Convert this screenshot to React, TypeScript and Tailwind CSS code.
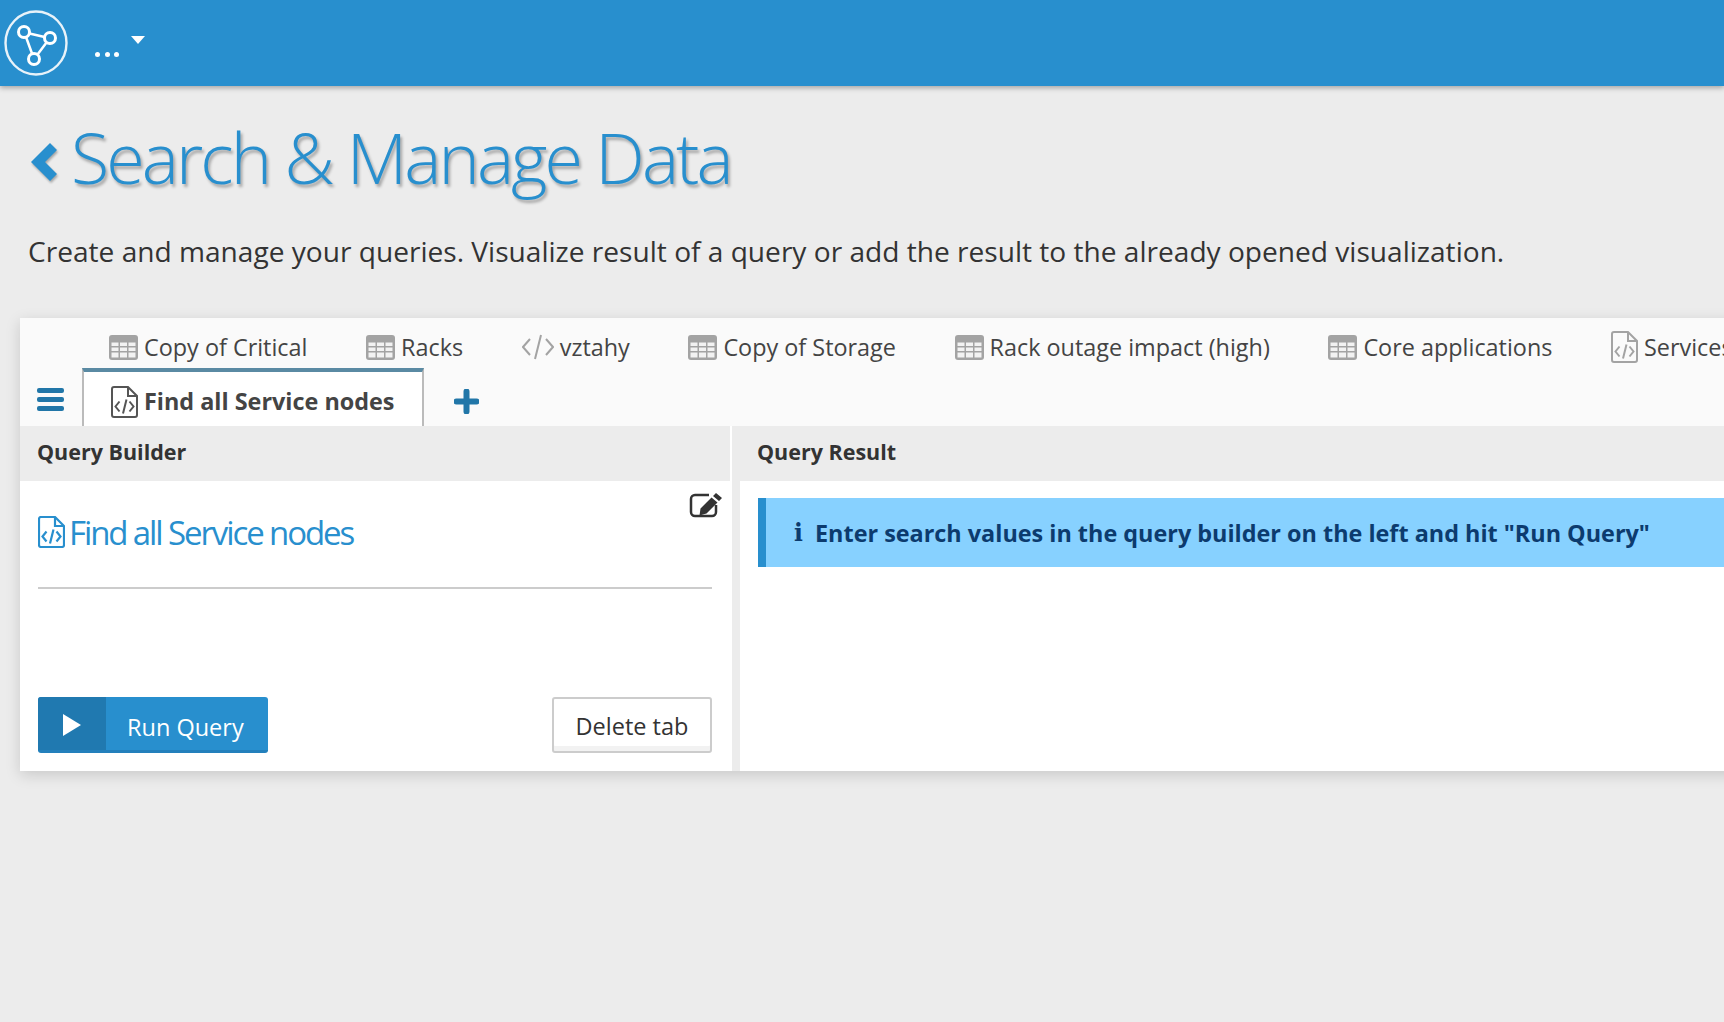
import React from 'react';

const TableIcon = () => (
  <svg viewBox="0 0 29 25" className="w-[29px] h-[25px] shrink-0">
    <rect width="29" height="25" rx="3" fill="#a3a3a3" />
    <path d="M2.500 7.500h7v3.500h-7zM11 7.500h7v3.500h-7zM19.500 7.500h7v3.500h-7zM2.500 12.500h7v3.500h-7zM11 12.500h7v3.500h-7zM19.500 12.500h7v3.500h-7zM2.500 17.500h7v5h-7zM11 17.500h7v5h-7zM19.500 17.500h7v5h-7z" fill="#f2f2f2" />
  </svg>
);

const CodeFileIcon = ({ color = '#a3a3a3', className = 'w-[27px] h-[32px]', width = 2 }: { color?: string; className?: string; width?: number }) => (
  <svg viewBox="0 0 27 32" className={`${className} shrink-0`} fill="none" stroke={color} strokeWidth={width}>
    <path d="M3 1h14l9 9v19a2 2 0 0 1-2 2H3a2 2 0 0 1-2-2V3a2 2 0 0 1 2-2z" />
    <path d="M17 1v9h9" />
    <path d="M8.500 15.500l-4 5 4 5M18.500 15.500l4 5-4 5M15.500 13.500l-3.500 14" />
  </svg>
);

const tabs = [
  { name: 'Copy of Critical', icon: 'table' },
  { name: 'Racks', icon: 'table' },
  { name: 'vztahy', icon: 'code' },
  { name: 'Copy of Storage', icon: 'table' },
  { name: 'Rack outage impact (high)', icon: 'table' },
  { name: 'Core applications', icon: 'table' },
  { name: 'Services', icon: 'file' },
];

const App = () => {
  return (
    <div className="w-[1724px] h-[1022px] overflow-hidden bg-[#ececec] font-['Open_Sans',sans-serif] text-[#333]">
      {/* Top bar */}
      <header className="h-[86px] bg-[#288fce] shadow-[0_2px_5px_rgba(0,0,0,0.3)] flex items-center pl-[4px]">
        <svg viewBox="0 0 64 66" className="w-[64px] h-[66px]" fill="none" stroke="#fff" strokeWidth="2.400">
          <ellipse cx="32" cy="33" rx="30.500" ry="31.500" stroke="#e8f2f9" />
          <circle cx="20" cy="22" r="5.500" strokeWidth="3" />
          <circle cx="46" cy="28" r="5.500" strokeWidth="3" />
          <circle cx="30" cy="49" r="5.500" strokeWidth="3" />
          <path d="M25.500 23.500l15 3.500M22 27l6 16.500M42.500 32.500l-9 12" strokeWidth="2.500" />
        </svg>
        <div className="relative ml-[26px] h-[40px] w-[60px]">
          <span className="absolute left-[1px] bottom-[6px] flex gap-[4.500px]">
            <i className="w-[5px] h-[5px] rounded-full bg-white" />
            <i className="w-[5px] h-[5px] rounded-full bg-white" />
            <i className="w-[5px] h-[5px] rounded-full bg-white" />
          </span>
          <span className="absolute left-[37px] top-[13px] w-0 h-0 border-x-[7px] border-x-transparent border-t-[8px] border-t-white" />
        </div>
      </header>

      {/* Page title */}
      <h1 className="mt-[31px] ml-[31px] flex items-center h-[80px] text-[#288fce] font-light text-[70px] tracking-[-2.900px] [text-shadow:2px_3px_3px_rgba(0,0,0,0.3)]">
        <svg viewBox="0 0 26 38" className="w-[26px] h-[38px] mr-[14px] mt-[9px] drop-shadow-[1px_2px_1px_rgba(0,0,0,0.3)]">
          <path d="M19 0l7 7-12 12 12 12-7 7L0 19z" fill="#288fce" />
        </svg>
        <span>Search &amp; Manage Data</span>
      </h1>
      <p className="mt-[36px] ml-[28px] text-[28.100px] leading-[36px] whitespace-nowrap">
        Create and manage your queries. Visualize result of a query or add the result to the already opened visualization.
      </p>

      {/* Card */}
      <div className="mt-[49px] ml-[20px] w-[1800px] h-[453px] bg-white shadow-[0_4px_14px_rgba(0,0,0,0.15)] flex flex-col">
        <div className="bg-[#fafafa] h-[108px] shrink-0">
          <div className="h-[50px] pt-[9px] pl-[81px] flex items-center whitespace-nowrap text-[23.400px] text-[#444]">
            {tabs.map((t) => (
              <div key={t.name} className="px-[29.300px] flex items-center gap-[6px] first:pl-[8px]">
                {t.icon === 'table' && <TableIcon />}
                {t.icon === 'code' && (
                  <svg viewBox="0 0 32 26" className="w-[32px] h-[26px]" fill="none" stroke="#a3a3a3" strokeWidth="2">
                    <path d="M8 5l-7 8 7 8M24 5l7 8-7 8M19 1l-6 24" />
                  </svg>
                )}
                {t.icon === 'file' && <CodeFileIcon />}
                <span>{t.name}</span>
              </div>
            ))}
          </div>
          <div className="h-[58px] flex items-stretch">
            <div className="w-[62px] flex flex-col justify-center gap-[4px] pl-[17px] pt-[5px]">
              <i className="block w-[27px] h-[5px] rounded-[2px] bg-[#2176a8]" />
              <i className="block w-[27px] h-[5px] rounded-[2px] bg-[#2176a8]" />
              <i className="block w-[27px] h-[5px] rounded-[2px] bg-[#2176a8]" />
            </div>
            <div className="w-[342px] bg-white border-x-2 border-x-[#bbb] border-t-4 border-t-[#5a8aa3] flex items-center pt-[6px] pl-[27px] gap-[6px] text-[23.400px] font-bold text-[#444]">
              <CodeFileIcon color="#555" />
              <span>Find all Service nodes</span>
            </div>
            <div className="flex items-center ml-[30px] pt-[8px]">
              <svg viewBox="0 0 25 25" className="w-[25px] h-[25px]">
                <path d="M12.500 2.500v20M2.500 12.500h20" stroke="#2176a8" strokeWidth="6" strokeLinecap="round" />
              </svg>
            </div>
          </div>
        </div>

        <div className="flex flex-1">
          {/* Query builder */}
          <div className="w-[712px] flex flex-col">
            <div className="h-[55px] mr-[2px] bg-[#ececec] flex items-center pb-[3px] pl-[17px] text-[21.500px] font-bold">Query Builder</div>
            <div className="relative flex-1 px-[18px]">
              <svg viewBox="0 0 33 25" className="absolute right-[10px] top-[12px] w-[33px] h-[25px]" fill="none">
                <path d="M20 2H6a4 4 0 0 0-4 4v13a4 4 0 0 0 4 4h17a4 4 0 0 0 4-4v-7" stroke="#333" strokeWidth="2.500" />
                <path d="M27 0l6 5-3 3-6-5zM22.500 4.500l6 5-11 11-7 2 1-7z" fill="#333" />
              </svg>
              <div className="h-[108px] border-b-2 border-b-[#ccc] mr-[2px] flex items-start pt-[30px] gap-[4px] text-[#288fce] text-[33px] font-normal tracking-[-2.100px] leading-[44px]">
                <CodeFileIcon color="#288fce" width={2.200} className="w-[27px] h-[32px] mt-[5px]" />
                <span>Find all Service nodes</span>
              </div>
              <div className="flex justify-between mt-[108px] mr-[2px]">
                <button className="w-[230px] h-[56px] bg-[#288fce] rounded-[3px] border-b-[3px] border-b-[#2380bc] flex items-center overflow-hidden text-white text-[23.500px]">
                  <span className="w-[68px] h-full bg-[#2079b0] flex items-center justify-center pt-[2px]">
                    <svg viewBox="0 0 18 22" className="w-[18px] h-[22px]"><path d="M0 0l18 11L0 22z" fill="#fff" /></svg>
                  </span>
                  <span className="ml-[21px] pt-[8px]">Run Query</span>
                </button>
                <button className="w-[160px] h-[56px] bg-white rounded-[3px] border-2 border-[#ccc] shadow-[inset_0_-5px_0_#f2f2f2] pt-[3px] text-[23.500px] text-[#333]">Delete tab</button>
              </div>
            </div>
          </div>

          {/* Query result */}
          <div className="flex-1 flex flex-col">
            <div className="h-[55px] bg-[#ececec] flex items-center pb-[3px] pl-[25px] text-[21.500px] font-bold">Query Result</div>
            <div className="flex-1 border-l-[8px] border-l-[#ececec] pl-[18px] pt-[17px]">
              <div className="h-[69px] bg-[#87d1ff] border-l-[8px] border-l-[#288fce] flex items-center pl-[28px] pt-[3px] text-[23.400px] font-bold text-[#0c3b6e]">
                <span className="w-[9px] mr-[12px] font-['DejaVu_Serif',serif] font-bold">i</span>
                <span>Enter search values in the query builder on the left and hit "Run Query"</span>
              </div>
            </div>
          </div>
        </div>
      </div>
    </div>
  );
};

export default App;
